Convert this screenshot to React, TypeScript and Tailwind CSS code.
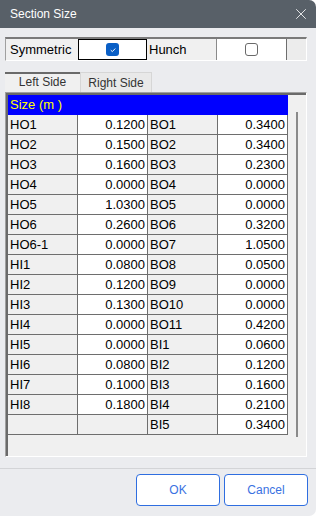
import { X } from 'lucide-react';

const rows: [string, string, string, string][] = [
  ['HO1', '0.1200', 'BO1', '0.3400'],
  ['HO2', '0.1500', 'BO2', '0.3400'],
  ['HO3', '0.1600', 'BO3', '0.2300'],
  ['HO4', '0.0000', 'BO4', '0.0000'],
  ['HO5', '1.0300', 'BO5', '0.0000'],
  ['HO6', '0.2600', 'BO6', '0.3200'],
  ['HO6-1', '0.0000', 'BO7', '1.0500'],
  ['HI1', '0.0800', 'BO8', '0.0500'],
  ['HI2', '0.1200', 'BO9', '0.0000'],
  ['HI3', '0.1300', 'BO10', '0.0000'],
  ['HI4', '0.0000', 'BO11', '0.4200'],
  ['HI5', '0.0000', 'BI1', '0.0600'],
  ['HI6', '0.0800', 'BI2', '0.1200'],
  ['HI7', '0.1000', 'BI3', '0.1600'],
  ['HI8', '0.1800', 'BI4', '0.2100'],
  ['', '', 'BI5', '0.3400'],
];

function LabelCell({ text }: { text: string }) {
  return (
    <div className="flex h-[20px] w-[70px] items-center border-r border-b border-[#6e6e6e] bg-[#f0f0f0] pl-[2px]">
      {text}
    </div>
  );
}

function ValueCell({ text }: { text: string }) {
  return (
    <div
      className={`flex h-[20px] w-[70px] items-center justify-end border-r border-b border-[#6e6e6e] pr-[2px] ${
        text ? 'bg-white' : 'bg-[#f0f0f0]'
      }`}
    >
      {text}
    </div>
  );
}

export default function App() {
  return (
    <div className="h-[516px] w-[318px] bg-white font-['Liberation_Sans',Arial,sans-serif] text-[13px] text-black">
      <div className="flex h-[516px] w-[316px] flex-col overflow-hidden rounded-r-[7px] bg-[#ebecef]">
        {/* title bar */}
        <div className="flex h-[28px] shrink-0 items-center justify-between bg-[#586068] pl-[10px] pr-[6px] text-[12px] text-white">
          <span>Section Size</span>
          <X className="h-[18px] w-[18px]" strokeWidth={1.1} />
        </div>

        <div className="flex flex-col pl-[5px]">
          {/* symmetric / hunch row */}
          <div className="mt-[9px] flex h-[24px] w-[302px] border-t-2 border-l border-r border-b border-t-[#7a7a7a] border-l-[#a0a0a0] border-r-white border-b-white bg-[#ececec]">
            <div className="flex w-[72px] items-center bg-[#f0f0f0] pl-[4px]">Symmetric</div>
            <div className="flex w-[69px] items-center justify-center border border-black bg-white">
              <div className="flex h-[13px] w-[13px] items-center justify-center rounded-[3px] bg-[#0a5fc6]">
                <svg viewBox="0 0 10 10" className="h-[8px] w-[8px]" fill="none" stroke="white" strokeWidth="1.2">
                  <path d="M2.2 5.2 L4.2 7 L7.8 3.2" />
                </svg>
              </div>
            </div>
            <div className="flex w-[70px] items-center border-r border-[#8a8a8a] bg-[#f0f0f0] pl-[2px]">Hunch</div>
            <div className="flex w-[70px] items-center justify-center border-r border-[#6e6e6e] bg-white">
              <div className="h-[13px] w-[13px] rounded-[3px] border border-[#6a6a6a] bg-white" />
            </div>
          </div>

          {/* tabs */}
          <div className="mt-[11px] flex h-[20px] text-[12px] text-[#333]">
            <div className="flex w-[75px] items-end justify-center border-t-2 border-[#6a6a6a] bg-[#f0f0f0] pb-[1px]">
              Left Side
            </div>
            <div className="flex w-[72px] items-center justify-center border-t border-l border-r border-[#d6d6d6] bg-[#e9e9e9]">
              Right Side
            </div>
          </div>

          {/* grid frame */}
          <div className="h-[365px] w-[302px] border-t border-l border-r border-b border-t-[#a0a0a0] border-l-[#a0a0a0] border-r-white border-b-white">
            <div className="flex h-full border-t-2 border-l-2 border-[#6a6a6a] bg-[#f0f0f0]">
              <div className="flex w-[280px] flex-col">
                <div className="flex h-[20px] items-center bg-[#0000ff] pl-[2px] text-[#ffff00]">Size (m )</div>
                {rows.map((r, i) => (
                  <div key={i} className="flex">
                    <LabelCell text={r[0]} />
                    <ValueCell text={r[1]} />
                    <LabelCell text={r[2]} />
                    <ValueCell text={r[3]} />
                  </div>
                ))}
              </div>
              <div className="flex-1 pt-[17px]">
                <div className="ml-[8px] h-[325px] w-[2px] bg-[#8a8a8a]" />
              </div>
            </div>
          </div>
        </div>

        {/* footer */}
        <div className="mt-[11px] h-px w-full bg-[#d3d4d7]" />
        <div className="mt-[5px] flex justify-end gap-[4px] pr-[8px] text-[12px]">
          <button className="h-[32px] w-[84px] rounded-[4px] border border-[#2f6ee0] bg-white text-[#3a72e2]">
            OK
          </button>
          <button className="h-[32px] w-[84px] rounded-[4px] border border-[#2f6ee0] bg-white text-[#3a72e2]">
            Cancel
          </button>
        </div>
      </div>
    </div>
  );
}
